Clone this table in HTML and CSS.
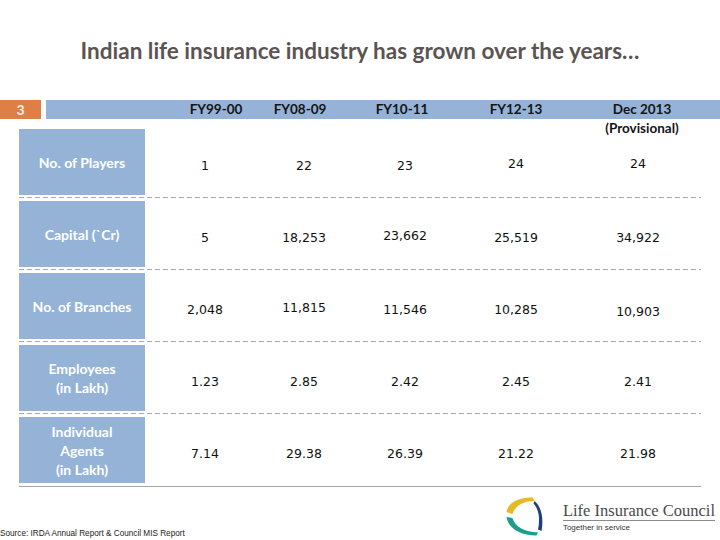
FILE: index.html
```html
<!DOCTYPE html>
<html>
<head>
<meta charset="utf-8">
<link rel="stylesheet" href="styles.css">
</head>
<body>
<h1 class="title">Indian life insurance industry has grown over the years…</h1>
<div class="head">
  <div class="num">3</div>
  <div class="bar">
    <span></span>
    <span class="hc">FY99-00</span>
    <span class="hc">FY08-09</span>
    <span class="hc">FY10-11</span>
    <span class="hc">FY12-13</span>
    <span class="hc">Dec 2013<br>(Provisional)</span>
  </div>
</div>
<div class="table">
  <div class="row">
    <div class="lbl">No. of Players</div>
    <div class="v">1</div><div class="v">22</div><div class="v">23</div><div class="v up">24</div><div class="v up">24</div>
  </div>
  <div class="sep"></div>
  <div class="row">
    <div class="lbl">Capital (`Cr)</div>
    <div class="v">5</div><div class="v">18,253</div><div class="v up">23,662</div><div class="v">25,519</div><div class="v">34,922</div>
  </div>
  <div class="sep"></div>
  <div class="row">
    <div class="lbl">No. of Branches</div>
    <div class="v">2,048</div><div class="v up">11,815</div><div class="v">11,546</div><div class="v">10,285</div><div class="v dn">10,903</div>
  </div>
  <div class="sep"></div>
  <div class="row">
    <div class="lbl">Employees<br>(in Lakh)</div>
    <div class="v">1.23</div><div class="v">2.85</div><div class="v">2.42</div><div class="v">2.45</div><div class="v">2.41</div>
  </div>
  <div class="sep"></div>
  <div class="row">
    <div class="lbl">Individual<br>Agents<br>(in Lakh)</div>
    <div class="v">7.14</div><div class="v">29.38</div><div class="v">26.39</div><div class="v">21.22</div><div class="v">21.98</div>
  </div>
  <div class="sep solid"></div>
</div>
<div class="footer">
  <div class="source">Source: IRDA Annual Report &amp; Council MIS Report</div>
  <div class="logo">
    <svg class="mark" width="40" height="41" viewBox="0 0 40 41">
      <path d="M1.5,16 C3,6.5 14,1 27.5,1.5 L29.5,5 C19,5 10,9.5 7.5,18 Z" fill="#e9b827"/>
      <path d="M29.5,5 C36,10 39,22 36.5,35 L33,33.5 C35,24 34.5,14 28.5,7.5 Z" fill="#1d3f7c"/>
      <path d="M1.5,21 C3,32 15,39.5 31.5,39.5 L33,36.5 C20,36 10,31 7.5,22 Z" fill="#1e9d8b"/>
    </svg>
    <div class="ltext">
      <div class="lname">Life Insurance Council</div>
      <div class="ltag">Together in service</div>
    </div>
  </div>
</div>
</body>
</html>
```

FILE: styles.css
```css
html, body {
  margin: 0;
  padding: 0;
  background: #ffffff;
  width: 720px;
  height: 540px;
  overflow: hidden;
}
body {
  font-family: Lato, "Open Sans", sans-serif;
}
.title {
  margin: 0;
  padding-top: 38px;
  height: 100px;
  box-sizing: border-box;
  text-align: center;
  font-size: 22.5px;
  line-height: 26px;
  font-weight: 700;
  color: #5b5452;
}
.head {
  display: flex;
  gap: 5px;
  height: 19px;
}
.num {
  width: 41px;
  background: #e07f45;
  color: #fbeee4;
  font-weight: 700;
  font-size: 14px;
  line-height: 19px;
  text-align: center;
}
.bar {
  flex: 1;
  background: #95b3d7;
  display: grid;
  grid-template-columns: 124px 92px 76px 128px 100px 152px;
  height: 19px;
}
.hc {
  text-align: center;
  font-weight: 700;
  font-size: 13.5px;
  line-height: 19px;
  color: #141414;
  white-space: nowrap;
}
.table {
  margin: 10px 19px 0;
  width: 682px;
}
.row {
  display: grid;
  grid-template-columns: 136px 100px 98px 104px 118px 126px;
  height: 66px;
  align-items: center;
}
.lbl {
  width: 126px;
  height: 66px;
  background: #95b3d7;
  color: #ffffff;
  font-weight: 700;
  font-size: 14px;
  line-height: 19px;
  display: flex;
  align-items: center;
  justify-content: center;
  text-align: center;
}
.v {
  text-align: center;
  font-family: "DejaVu Sans", Verdana, sans-serif;
  font-size: 12.5px;
  color: #111111;
  padding-top: 7px;
}
.up { position: relative; top: -2px; }
.dn { position: relative; top: 2px; }
.sep {
  height: 1px;
  margin: 2px 0 3px;
  background: repeating-linear-gradient(to right, #a9a9a9 0 5px, transparent 5px 8px);
}
.sep.solid {
  background: #a6a6a6;
  margin: 3px 0 0;
}
.footer {
  height: 53px;
  display: flex;
  justify-content: space-between;
  align-items: flex-end;
}
.source {
  font-family: "Liberation Sans", Arial, sans-serif;
  font-size: 8.2px;
  color: #222222;
  padding-bottom: 2px;
}
.logo {
  display: flex;
  align-items: flex-end;
  gap: 18px;
  margin-right: 5px;
  padding-bottom: 3px;
}
.mark {
  display: block;
}
.ltext {
  padding-bottom: 4px;
}
.lname {
  font-family: "Liberation Serif", "Times New Roman", serif;
  font-size: 16.5px;
  line-height: 17px;
  color: #4a4a4a;
  border-bottom: 1px solid #8a8a8a;
  padding-bottom: 1px;
  white-space: nowrap;
}
.ltag {
  font-family: "Liberation Sans", Arial, sans-serif;
  font-size: 8px;
  line-height: 11px;
  color: #333333;
  padding-top: 1px;
}
```
